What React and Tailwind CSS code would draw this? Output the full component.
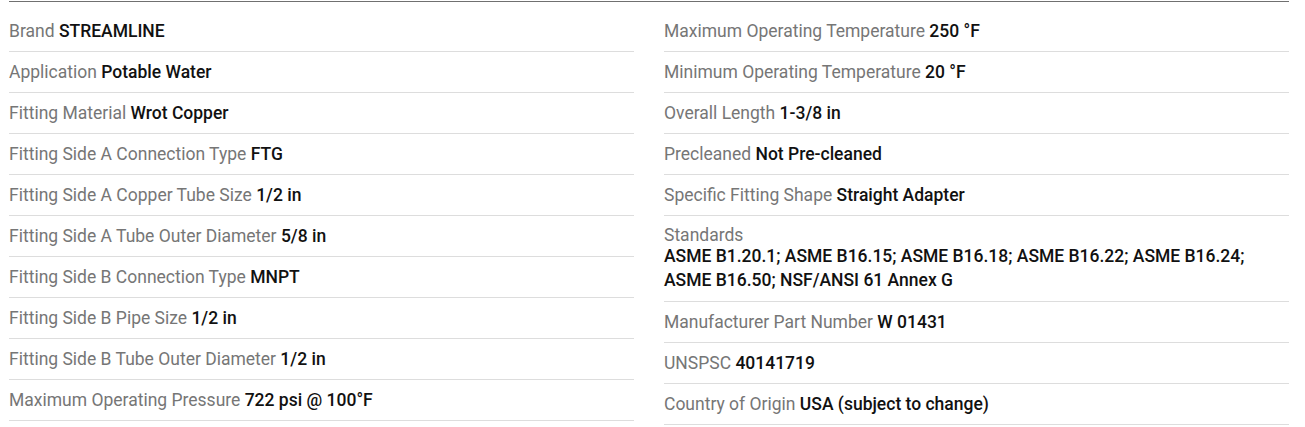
export default function App() {
  const left = [
    ["Brand", "STREAMLINE"],
    ["Application", "Potable Water"],
    ["Fitting Material", "Wrot Copper"],
    ["Fitting Side A Connection Type", "FTG"],
    ["Fitting Side A Copper Tube Size", "1/2 in"],
    ["Fitting Side A Tube Outer Diameter", "5/8 in"],
    ["Fitting Side B Connection Type", "MNPT"],
    ["Fitting Side B Pipe Size", "1/2 in"],
    ["Fitting Side B Tube Outer Diameter", "1/2 in"],
    ["Maximum Operating Pressure", "722 psi @ 100°F"],
  ];
  const right = [
    ["Maximum Operating Temperature", "250 °F"],
    ["Minimum Operating Temperature", "20 °F"],
    ["Overall Length", "1-3/8 in"],
    ["Precleaned", "Not Pre-cleaned"],
    ["Specific Fitting Shape", "Straight Adapter"],
    ["Standards", "ASME B1.20.1; ASME B16.15; ASME B16.18; ASME B16.22; ASME B16.24; ASME B16.50; NSF/ANSI 61 Annex G", true],
    ["Manufacturer Part Number", "W 01431"],
    ["UNSPSC", "40141719"],
    ["Country of Origin", "USA (subject to change)"],
  ];
  const Row = ({ label, value, block }) =>
    block ? (
      <div className="border-b border-[#dddddd] pt-[10px] pb-[9px]">
        <div className="text-[#767676] leading-[18px]">{label}</div>
        <div className="text-[#111111] font-medium leading-6">{value}</div>
      </div>
    ) : (
      <div className="border-b border-[#dddddd] py-2 leading-6">
        <span className="text-[#767676]">{label}</span>{" "}
        <span className="text-[#111111] font-medium">{value}</span>
      </div>
    );
  return (
    <div className="w-[1305px] h-[427px] bg-white pl-[9px] pt-px" style={{ fontFamily: "Roboto, 'Liberation Sans', sans-serif" }}>
      <div className="w-[1280px] border-t border-[#707070] pt-[9px] grid grid-cols-2 gap-x-[30px] text-[17.5px]">
        <div className="flex flex-col">
          {left.map(([l, v]) => (
            <Row key={l} label={l} value={v} />
          ))}
        </div>
        <div className="flex flex-col">
          {right.map(([l, v, b]) => (
            <Row key={l} label={l} value={v} block={b} />
          ))}
        </div>
      </div>
    </div>
  );
}
